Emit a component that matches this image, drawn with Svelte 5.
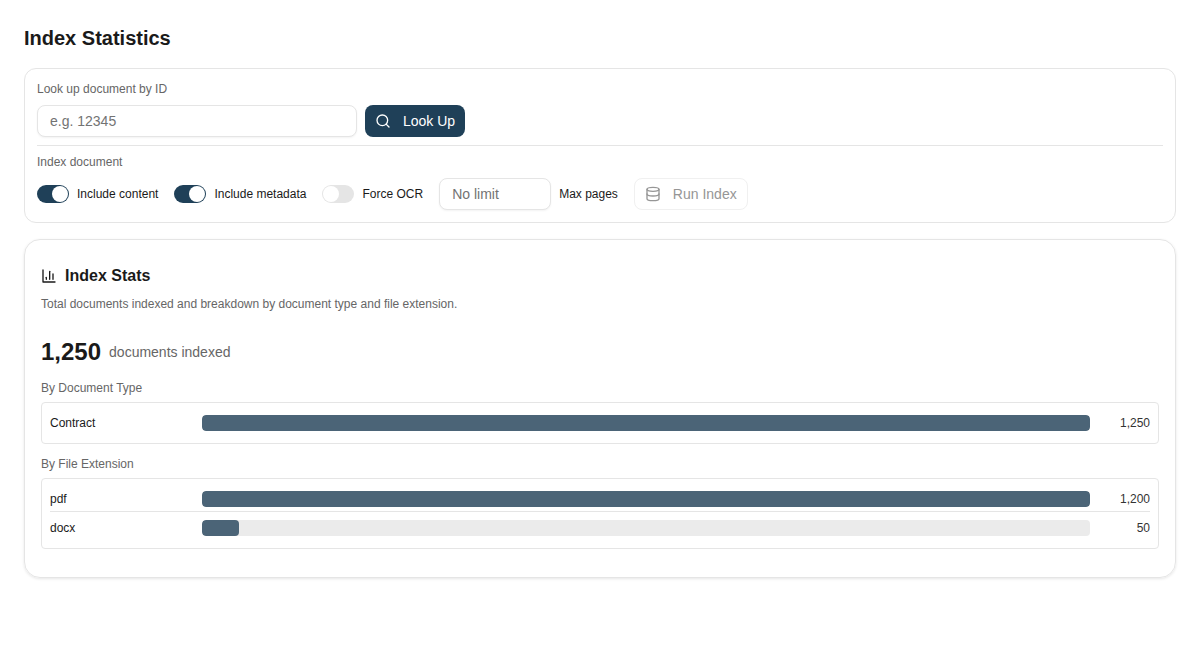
<script lang="ts">
  let includeContent = $state(true);
  let includeMetadata = $state(true);
  let forceOcr = $state(false);

  const byType = [{ label: 'Contract', count: 1250, pct: 100 }];
  const byExt = [
    { label: 'pdf', count: 1200, pct: 100 },
    { label: 'docx', count: 50, pct: 4.17 }
  ];
</script>

{#snippet toggle(on: boolean, label: string, flip: () => void)}
  <label class="toggle">
    <button class="switch" class:on onclick={flip} aria-label={label} type="button">
      <span class="knob"></span>
    </button>
    <span>{label}</span>
  </label>
{/snippet}

{#snippet rows(items: { label: string; count: number; pct: number }[])}
  <div class="table">
    {#each items as item}
      <div class="row">
        <span class="row__label">{item.label}</span>
        <div class="track"><div class="fill" style="width: {item.pct}%"></div></div>
        <span class="row__count">{item.count.toLocaleString('en-US')}</span>
      </div>
    {/each}
  </div>
{/snippet}

<main class="page">
  <h1>Index Statistics</h1>

  <section class="tools">
    <div class="caption">Look up document by ID</div>
    <div class="lookup">
      <input class="field field--id" placeholder="e.g. 12345" />
      <button class="btn btn--primary" type="button">
        <svg width="16" height="16" viewBox="0 0 24 24" fill="none" stroke="currentColor" stroke-width="2" stroke-linecap="round" stroke-linejoin="round"><circle cx="11" cy="11" r="8" /><path d="m21 21-4.3-4.3" /></svg>
        Look Up
      </button>
    </div>
    <hr />
    <div class="caption">Index document</div>
    <div class="options">
      {@render toggle(includeContent, 'Include content', () => (includeContent = !includeContent))}
      {@render toggle(includeMetadata, 'Include metadata', () => (includeMetadata = !includeMetadata))}
      {@render toggle(forceOcr, 'Force OCR', () => (forceOcr = !forceOcr))}
      <input class="field field--pages" placeholder="No limit" />
      <span class="option-text">Max pages</span>
      <button class="btn btn--disabled" type="button" disabled>
        <svg width="16" height="16" viewBox="0 0 24 24" fill="none" stroke="currentColor" stroke-width="2" stroke-linecap="round" stroke-linejoin="round"><ellipse cx="12" cy="5" rx="9" ry="3" /><path d="M3 5v14a9 3 0 0 0 18 0V5" /><path d="M3 12a9 3 0 0 0 18 0" /></svg>
        Run Index
      </button>
    </div>
  </section>

  <section class="stats">
    <div class="stats__head">
      <svg width="16" height="16" viewBox="0 0 24 24" fill="none" stroke="currentColor" stroke-width="2" stroke-linecap="round" stroke-linejoin="round"><path d="M3 3v18h18" /><path d="M18 17V9" /><path d="M13 17V5" /><path d="M8 17v-3" /></svg>
      <h2>Index Stats</h2>
    </div>
    <p class="stats__desc">Total documents indexed and breakdown by document type and file extension.</p>
    <div class="total">
      <strong>1,250</strong>
      <span>documents indexed</span>
    </div>
    <div class="caption caption--group">By Document Type</div>
    {@render rows(byType)}
    <div class="caption caption--group caption--next">By File Extension</div>
    {@render rows(byExt)}
  </section>
</main>

<style>
  :global(body) {
    margin: 0;
    background: #fff;
    font-family: 'Liberation Sans', Arial, sans-serif;
    color: #1a1a1a;
  }

  .page {
    padding: 24px;
    display: flex;
    flex-direction: column;
  }

  h1 {
    margin: 0 0 16px;
    font-size: 20px;
    line-height: 28px;
    font-weight: 700;
    color: #1a1a1a;
  }

  .tools {
    border: 1px solid #e5e5e5;
    border-radius: 12px;
    padding: 12px;
    margin-bottom: 16px;
  }

  .caption {
    font-size: 12px;
    line-height: 16px;
    color: #666;
    margin-bottom: 8px;
  }

  .lookup {
    display: flex;
    gap: 8px;
  }

  .field {
    box-sizing: border-box;
    height: 32px;
    padding: 0 12px;
    border: 1px solid #e5e5e5;
    border-radius: 8px;
    background: #fff;
    font: 14px 'Liberation Sans', Arial, sans-serif;
    color: #1a1a1a;
    box-shadow: 0 1px 2px rgba(0, 0, 0, 0.05);
    outline: none;
  }

  .field::placeholder {
    color: #737373;
    opacity: 1;
  }

  .field--id {
    width: 320px;
  }

  .field--pages {
    width: 112px;
  }

  .btn {
    height: 32px;
    display: inline-flex;
    align-items: center;
    gap: 12px;
    padding: 0 10px;
    border-radius: 8px;
    font: 14px 'Liberation Sans', Arial, sans-serif;
    box-sizing: border-box;
  }

  .btn--primary {
    border: 0;
    background: #1f4058;
    color: #fff;
    cursor: pointer;
  }

  .btn--disabled {
    border: 1px solid #f0f0f0;
    background: #fff;
    color: #969696;
  }

  hr {
    border: 0;
    border-top: 1px solid #e5e5e5;
    margin: 8px 0;
  }

  .options {
    display: flex;
    align-items: center;
    gap: 16px;
  }

  .toggle {
    display: flex;
    align-items: center;
    gap: 8px;
    font-size: 12px;
    color: #1a1a1a;
  }

  .option-text {
    font-size: 12px;
    margin-left: -8px;
  }

  .switch {
    width: 32px;
    height: 18px;
    padding: 1px;
    border: 0;
    border-radius: 9px;
    background: #e5e5e5;
    display: flex;
    cursor: pointer;
  }

  .switch.on {
    background: #1f4058;
    justify-content: flex-end;
  }

  .knob {
    width: 16px;
    height: 16px;
    border-radius: 50%;
    background: #fff;
  }

  .stats {
    border: 1px solid #e5e5e5;
    border-radius: 16px;
    padding: 16px 16px 28px;
    box-shadow: 0 1px 3px rgba(0, 0, 0, 0.1);
  }

  .stats__head {
    display: flex;
    align-items: center;
    gap: 8px;
    margin-top: 8px;
    height: 24px;
    color: #1a1a1a;
  }

  h2 {
    margin: 0;
    font-size: 16px;
    line-height: 24px;
    font-weight: 700;
  }

  .stats__desc {
    margin: 8px 0 0;
    font-size: 12px;
    line-height: 16px;
    color: #666;
  }

  .total {
    display: flex;
    align-items: center;
    gap: 8px;
    margin-top: 24px;
    margin-bottom: 12px;
    line-height: 32px;
  }

  .total strong {
    font-size: 24px;
    font-weight: 700;
  }

  .total span {
    font-size: 14px;
    color: #666;
  }

  .caption--group {
    margin-bottom: 0;
    padding-bottom: 6px;
  }

  .caption--next {
    margin-top: 12px;
  }

  .table {
    border: 1px solid #e5e5e5;
    border-radius: 4px;
    padding: 4px 8px;
  }

  .row {
    display: grid;
    grid-template-columns: 152px 1fr 60px;
    align-items: center;
    padding: 8px 0;
    font-size: 12px;
  }

  .row:not(:last-child) {
    padding-bottom: 4px;
    border-bottom: 1px solid #e5e5e5;
  }

  .row__count {
    text-align: right;
    color: #333;
  }

  .track {
    height: 16px;
    background: #ebebeb;
    border-radius: 4px;
    overflow: hidden;
  }

  .fill {
    height: 100%;
    background: #4b6477;
    border-radius: 4px;
  }
</style>
